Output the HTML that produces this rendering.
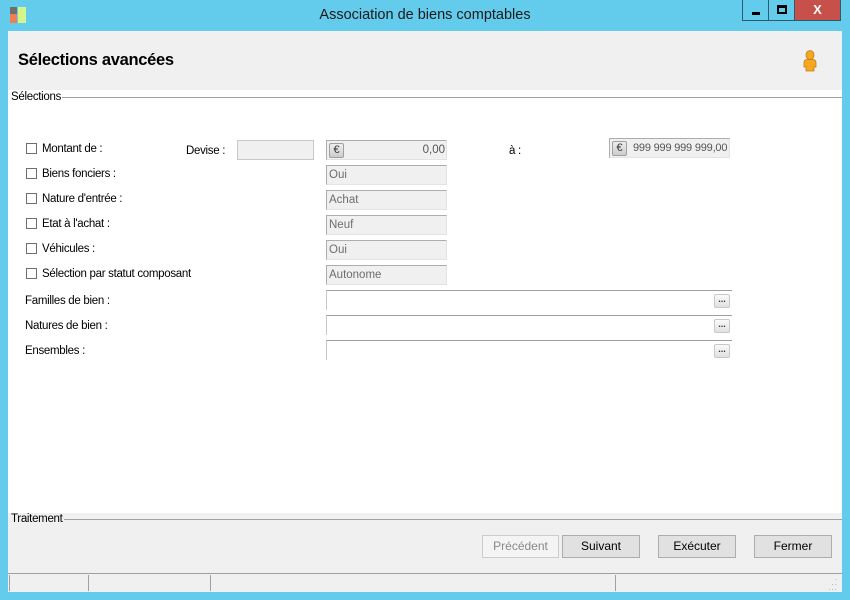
<!DOCTYPE html>
<html><head><meta charset="utf-8"><style>
*{margin:0;padding:0;box-sizing:border-box}
body{width:850px;height:600px;overflow:hidden;background:#63cbec;font-family:"Liberation Sans",sans-serif;font-size:12px;color:#000;position:relative}
.a{position:absolute;white-space:nowrap}
.lbl{position:absolute;font-size:11.5px;letter-spacing:-0.3px;white-space:nowrap}
.cb{position:absolute;width:11px;height:11px;border:1px solid #6e6e6e;background:#fff;left:26px}
.fld{position:absolute;left:326px;width:121px;height:20px;background:#f0f0f0;border:1px solid #adadad;border-right-color:#e3e3e3;border-bottom-color:#e3e3e3;color:#6d6d6d;font-size:11.5px;padding:3px 0 0 2px;white-space:nowrap;overflow:hidden}
.wf{position:absolute;left:326px;width:406px;height:20px;background:#fff;border-top:1px solid #a0a0a0;border-left:1px solid #c8c8c8}
.dots{position:absolute;right:2px;top:3px;width:16px;height:14px;border:1px solid #c8c8c8;border-radius:2px;background:linear-gradient(#fafafa,#e0e0e0);font-size:9px;line-height:8px;text-align:center;color:#333;font-weight:bold}
.btn{position:absolute;top:535px;height:23px;border:1px solid #adadad;background:#e1e1e1;font-size:12px;text-align:center;line-height:21px}
.eu{position:absolute;left:2px;top:2px;width:15px;height:15px;border:1px solid #a0a0a0;border-radius:2px;background:linear-gradient(#eee,#ccc);font-size:11px;line-height:13px;text-align:center;color:#333}
</style></head><body>
<div class="a" style="left:10px;top:7px;width:7px;height:7px;background:#6f6f6f"></div>
<div class="a" style="left:10px;top:14px;width:7px;height:9px;background:#f07e50"></div>
<div class="a" style="left:18px;top:7px;width:8px;height:16px;background:#d4f58a"></div>
<div class="a" style="left:0;top:7px;width:850px;text-align:center;font-size:14.5px;color:#1a1a1a">Association de biens comptables</div>
<div class="a" style="left:742px;top:0;width:27px;height:21px;border:1px solid #2a5d70;border-top:none;background:#63cbec"><div class="a" style="left:9px;top:12px;width:8px;height:3px;background:#000"></div></div>
<div class="a" style="left:768px;top:0;width:27px;height:21px;border:1px solid #2a5d70;border-top:none;background:#63cbec"><div class="a" style="left:8px;top:5px;width:10px;height:9px;border:2px solid #000;border-top-width:3px"></div></div>
<div class="a" style="left:794px;top:0;width:47px;height:21px;border:1px solid #2a5d70;border-top:none;background:#c7504b;color:#fff;font-weight:bold;font-size:13px;text-align:center;line-height:20px">X</div>
<div class="a" style="left:8px;top:31px;width:834px;height:561px;background:#f0f0f0"></div>
<div class="a" style="left:18px;top:51px;font-size:16.5px;font-weight:bold;letter-spacing:-0.3px">Sélections avancées</div>
<svg class="a" style="left:801px;top:50px" width="18" height="22" viewBox="0 0 18 22"><ellipse cx="9" cy="5" rx="4" ry="4.5" fill="#f5a623" stroke="#c77d0a" stroke-width=".8"/><path d="M3 13 Q3 9.5 6 9.5 L12 9.5 Q15 9.5 15 13 L15 17 L13 17 L13 21 L5 21 L5 17 L3 17 Z" fill="#f5a623" stroke="#c77d0a" stroke-width=".8"/></svg>
<div class="a" style="left:8px;top:90px;width:834px;height:423px;background:#fff"></div>
<div class="a" style="left:62px;top:97px;width:780px;height:1px;background:#a0a0a0"></div>
<div class="lbl" style="left:11px;top:91px">Sélections</div>
<div class="cb" style="top:143px"></div><div class="lbl" style="left:42px;top:143px">Montant de :</div>
<div class="lbl" style="left:186px;top:145px">Devise :</div>
<div class="a" style="left:237px;top:140px;width:77px;height:20px;background:#f0f0f0;border:1px solid #c8c8c8"></div>
<div class="fld" style="top:140px;text-align:right;padding-right:1px;color:#555"><div class="eu">€</div>0,00</div>
<div class="lbl" style="left:509px;top:145px">à :</div>
<div class="fld" style="left:609px;top:138px;color:#555;padding-left:23px;font-size:11px;letter-spacing:-0.2px;padding-top:3px"><div class="eu">€</div>999 999 999 999,00</div>
<div class="cb" style="top:168px"></div><div class="lbl" style="left:42px;top:168px">Biens fonciers :</div><div class="fld" style="top:165px">Oui</div>
<div class="cb" style="top:193px"></div><div class="lbl" style="left:42px;top:193px">Nature d'entrée :</div><div class="fld" style="top:190px">Achat</div>
<div class="cb" style="top:218px"></div><div class="lbl" style="left:42px;top:218px">Etat à l'achat :</div><div class="fld" style="top:215px">Neuf</div>
<div class="cb" style="top:243px"></div><div class="lbl" style="left:42px;top:243px">Véhicules :</div><div class="fld" style="top:240px">Oui</div>
<div class="cb" style="top:268px"></div><div class="lbl" style="left:42px;top:268px">Sélection par statut composant</div><div class="fld" style="top:265px">Autonome</div>
<div class="lbl" style="left:25px;top:295px">Familles de bien :</div><div class="wf" style="top:290px"><div class="dots">...</div></div>
<div class="lbl" style="left:25px;top:320px">Natures de bien :</div><div class="wf" style="top:315px"><div class="dots">...</div></div>
<div class="lbl" style="left:25px;top:345px">Ensembles :</div><div class="wf" style="top:340px"><div class="dots">...</div></div>
<div class="a" style="left:64px;top:519px;width:778px;height:1px;background:#a0a0a0"></div>
<div class="lbl" style="left:11px;top:513px">Traitement</div>
<div class="btn" style="left:482px;width:77px;background:#f4f4f4;border-color:#ccc;color:#888">Précédent</div>
<div class="btn" style="left:562px;width:78px">Suivant</div>
<div class="btn" style="left:658px;width:78px">Exécuter</div>
<div class="btn" style="left:754px;width:78px">Fermer</div>
<div class="a" style="left:8px;top:573px;width:834px;height:1px;background:#a0a0a0"></div>
<div class="a" style="left:9px;top:575px;width:1px;height:16px;background:#a0a0a0"></div>
<div class="a" style="left:88px;top:575px;width:1px;height:16px;background:#a0a0a0"></div>
<div class="a" style="left:210px;top:575px;width:1px;height:16px;background:#a0a0a0"></div>
<div class="a" style="left:615px;top:575px;width:1px;height:16px;background:#a0a0a0"></div>
<div class="a" style="left:824px;top:575px;font-size:8px;color:#999;line-height:5px;letter-spacing:1px;text-align:right;width:14px;white-space:normal">.<br>..<br>...</div>
</body></html>
